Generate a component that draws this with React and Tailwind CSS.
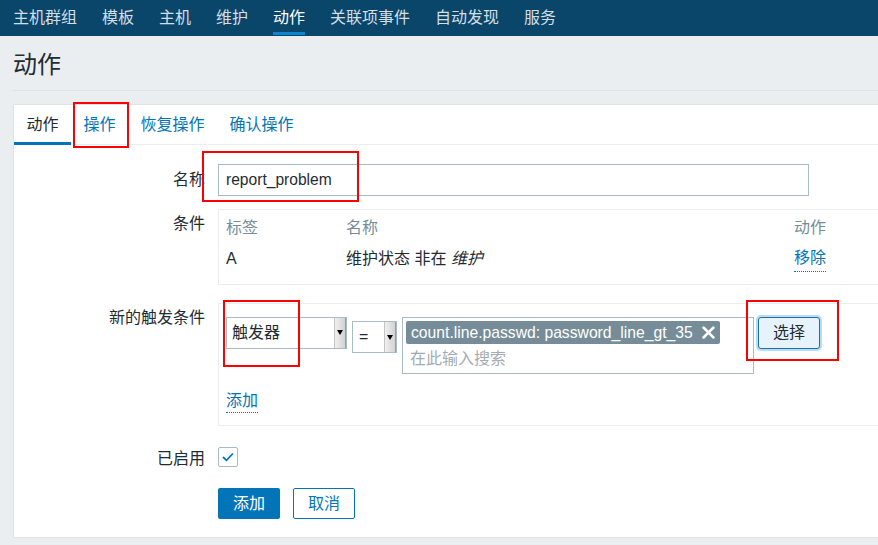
import React from 'react';

const font = { fontFamily: '"Liberation Sans", "Noto Sans CJK SC", sans-serif' };

const navItems = ['主机群组', '模板', '主机', '维护', '动作', '关联项事件', '自动发现', '服务'];
const tabs = ['动作', '操作', '恢复操作', '确认操作'];

function SelectBox({ label, width, arrowTop }) {
  return (
    <div className={`flex h-[32px] border border-[#a9bbc4] bg-white ${width}`}>
      <div className="flex-1 flex items-center pl-[5px] text-[16px] text-[#1f2c33]">{label}</div>
      <div className="w-[12px] bg-gradient-to-r from-[#f0f0f0] to-[#d2d2d2] border-l border-[#c4c4c4] border-r border-r-[#9c9c9c] flex justify-center">
        <div className={`${arrowTop} w-0 h-0 border-l-[3.5px] border-r-[3.5px] border-t-[5px] border-l-transparent border-r-transparent border-t-black`} />
      </div>
    </div>
  );
}

function Row({ label, labelClass = 'pt-[3px]', children, className = '' }) {
  return (
    <div className={`flex ${className}`}>
      <div className={`w-[191px] text-right text-[16px] leading-[24px] text-[#1f2c33] ${labelClass}`}>{label}</div>
      <div className="ml-[13px] flex-1">{children}</div>
    </div>
  );
}

function RedBox({ cls }) {
  return <div className={`absolute border-2 border-[#ff0000] pointer-events-none ${cls}`} />;
}

export default function App() {
  return (
    <div className="relative w-[878px] h-[545px] overflow-hidden bg-[#ebeef0]" style={font}>
      {/* top menu */}
      <div className="h-[36px] bg-[#0a466a] flex pl-[13px] gap-[25px]">
        {navItems.map((n) => (
          <div
            key={n}
            className={`relative flex items-center text-[16px] ${n === '动作' ? 'text-white' : 'text-[#d3dee5]'}`}
          >
            {n}
            {n === '动作' && <div className="absolute left-0 right-0 bottom-[1px] h-[3px] bg-[#0b85cf]" />}
          </div>
        ))}
      </div>

      <div className="pl-[13px]">
        <div className="pt-[13px] pb-[9px] border-b border-[#dce2e5] text-[24px] leading-[32px] text-[#1f2c33]">
          动作
        </div>

        <div className="mt-[13px] w-[900px] bg-white border border-[#dfe4e7] pb-[18px]">
          {/* tabs */}
          <div className="flex h-[40px] border-b border-[#ebeef0]">
            {tabs.map((t, i) => (
              <div
                key={t}
                className={`relative px-[12.5px] flex items-center text-[16px] ${i === 0 ? 'text-[#1f2c33]' : 'text-[#0275b8]'}`}
              >
                {t}
                {i === 0 && <div className="absolute left-0 right-0 -bottom-[1px] h-[3px] bg-[#0275b8]" />}
              </div>
            ))}
          </div>

          <div className="pt-[19px]">
            <Row label="名称" labelClass="leading-[32px]">
              <div className="w-[591px] h-[32px] border border-[#a9bbc4] flex items-center pl-[7px] text-[15.6px] text-[#1f2c33]">
                report_problem
              </div>
            </Row>

            <Row label="条件" className="mt-[13px]">
              <div className="border border-[#ebeef0] px-[7px] pt-[6px] pb-[12px] text-[16px] leading-[24px]">
                <div className="flex text-[#768d99]">
                  <div className="w-[120px]">标签</div>
                  <div className="w-[448px]">名称</div>
                  <div>动作</div>
                </div>
                <div className="flex mt-[7px] text-[#1f2c33]">
                  <div className="w-[120px]">A</div>
                  <div className="w-[448px]">
                    维护状态 非在 <span className="italic">维护</span>
                  </div>
                  <div className="text-[#0275b8] border-b border-dotted border-[#0275b8] leading-[22px] h-[25px]">移除</div>
                </div>
              </div>
            </Row>

            <Row label="新的触发条件" className="mt-[18px]">
              <div className="border border-[#ebeef0] px-[7px] pt-[13px] pb-[12px]">
                <div className="flex items-start">
                  <SelectBox label="触发器" width="w-[121px]" arrowTop="mt-[12px]" />
                  <div className="ml-[5px] mt-[4px]">
                    <SelectBox label={<span className="pl-[1px]">=</span>} width="w-[45px]" arrowTop="mt-[13px]" />
                  </div>
                  <div className="ml-[5px] w-[352px] h-[57px] border border-[#a9bbc4] px-[3px] pt-[3px]">
                    <div className="inline-flex items-center h-[23px] bg-[#768d99] rounded-[2px] pl-[5px] pr-[5px] text-white text-[15.7px]">
                      count.line.passwd: password_line_gt_35
                      <svg width="13" height="13" viewBox="0 0 12 12" className="ml-[9px]">
                        <path d="M1.5 1.5 L10.5 10.5 M10.5 1.5 L1.5 10.5" stroke="white" strokeWidth="2.6" strokeLinecap="round" />
                      </svg>
                    </div>
                    <div className="pl-[4px] mt-[2px] text-[16px] leading-[24px] text-[#a3acb2]">在此输入搜索</div>
                  </div>
                  <div className="ml-[4px] w-[62px] h-[32px] rounded-[3px] border border-[#1e6fa8] bg-[#e6f3fd] shadow-[0_0_0_2px_#b7dcf6] flex items-center justify-center text-[16px] text-[#1f2c33]">
                    选择
                  </div>
                </div>
                <div className="mt-[15px]">
                  <span className="text-[16px] leading-[22px] text-[#0275b8] border-b border-dotted border-[#0275b8] inline-block">
                    添加
                  </span>
                </div>
              </div>
            </Row>

            <Row label="已启用" labelClass="leading-[20px]" className="mt-[21px]">
              <div className="w-[20px] h-[20px] border border-[#a9bbc4] rounded-[2px] flex items-center justify-center">
                <svg width="12" height="10" viewBox="0 0 12 10">
                  <path d="M1 5 L4.5 8.3 L11 1.5" fill="none" stroke="#0275b8" strokeWidth="1.8" />
                </svg>
              </div>
            </Row>

            <Row label="" className="mt-[17px]" labelClass="">
              <div className="flex gap-[13px]">
                <div className="w-[62px] h-[31px] rounded-[2px] bg-[#0275b8] text-white text-[16px] flex items-center justify-center">
                  添加
                </div>
                <div className="w-[62px] h-[31px] rounded-[2px] border border-[#0275b8] bg-white text-[#0275b8] text-[16px] flex items-center justify-center">
                  取消
                </div>
              </div>
            </Row>
          </div>
        </div>
      </div>

      {/* red annotation boxes from the screenshot */}
      <RedBox cls="left-[73px] top-[102px] w-[56px] h-[46px]" />
      <RedBox cls="left-[202px] top-[151px] w-[157px] h-[51px]" />
      <RedBox cls="left-[223px] top-[300px] w-[77px] h-[67px]" />
      <RedBox cls="left-[746px] top-[300px] w-[93px] h-[61px]" />
    </div>
  );
}
